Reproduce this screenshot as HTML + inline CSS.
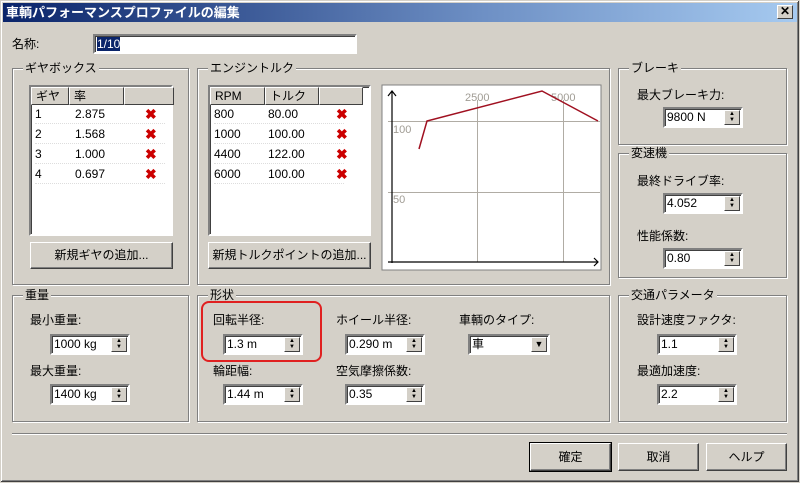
<!DOCTYPE html><html><head><meta charset="utf-8"><style>
*{box-sizing:border-box}
body{margin:0;width:800px;height:483px;background:#d4d0c8;font-family:"Liberation Sans","Noto Sans CJK JP",sans-serif;font-size:12px;color:#000;position:relative;overflow:hidden}
.a{position:absolute}
.win{left:0;top:0;width:800px;height:483px;border:1px solid #d4d0c8;box-shadow:inset -1px -1px #404040,inset 1px 1px #fff,inset -2px -2px #808080}
.title{left:3px;top:3px;width:794px;height:19px;background:linear-gradient(90deg,#0a246a,#6d8fc4 60%,#a6caf0);color:#fff;font-weight:bold;font-size:13px;line-height:19px;padding-left:3px}
.close{right:7px;top:5px;width:16px;height:14px;background:#d4d0c8;border:1px solid;border-color:#fff #404040 #404040 #fff;font-size:12px;line-height:11px;text-align:center;font-weight:bold;color:#000}
.grp{border:1px solid #808080;box-shadow:1px 1px #fff,inset 1px 1px #fff}
.gt{background:#d4d0c8;padding:0 2px;top:-8px;left:10px;position:absolute;line-height:14px}
.sunk{background:#fff;border:2px solid;border-color:#808080 #fff #fff #808080;box-shadow:inset 1px 1px #404040}
.btn{background:#d4d0c8;border:1px solid;border-color:#fff #404040 #404040 #fff;box-shadow:inset -1px -1px #808080;text-align:center}
.fld{height:21px;background:#fff;border:2px solid;border-color:#808080 #fff #fff #808080;box-shadow:inset 1px 1px #404040;padding-left:2px;line-height:17px}
.sp{position:absolute;right:1px;top:1px;width:16px;height:15px;background:#d4d0c8;border:1px solid;border-color:#fff #404040 #404040 #fff;font-size:6px;line-height:6px;text-align:center}
.hd{position:absolute;top:0;height:18px;background:#d4d0c8;border:1px solid;border-color:#fff #404040 #404040 #fff;line-height:16px;padding-left:4px}
.x{color:#c00;font-weight:bold;font-size:14px}
.row{position:absolute;left:8px;height:19px;line-height:19px;border-bottom:1px dotted #ddd;width:130px}
</style></head><body>
<div class="a win"></div>
<div class="a title">車輌パフォーマンスプロファイルの編集</div>
<div class="a close">✕</div>

<div class="a" style="left:12px;top:35px">名称:</div>
<div class="a fld" style="left:93px;top:34px;width:264px;height:20px"><span style="background:#0a246a;color:#fff">1/10</span></div>

<div class="a grp" style="left:12px;top:68px;width:177px;height:217px"><span class="gt">ギヤボックス</span></div>
<div class="a sunk" style="left:29px;top:85px;width:144px;height:151px">
<div class="hd" style="left:0;width:38px">ギヤ</div><div class="hd" style="left:38px;width:55px">率</div><div class="hd" style="left:93px;width:50px"></div>
<div class="row" style="top:18px;left:4px">1<span class="a" style="left:40px">2.875</span><span class="a x" style="left:110px">✖</span></div>
<div class="row" style="top:38px;left:4px">2<span class="a" style="left:40px">1.568</span><span class="a x" style="left:110px">✖</span></div>
<div class="row" style="top:58px;left:4px">3<span class="a" style="left:40px">1.000</span><span class="a x" style="left:110px">✖</span></div>
<div class="row" style="top:78px;left:4px">4<span class="a" style="left:40px">0.697</span><span class="a x" style="left:110px">✖</span></div>
</div>
<div class="a btn" style="left:30px;top:242px;width:143px;height:27px;line-height:25px">新規ギヤの追加...</div>

<div class="a grp" style="left:197px;top:68px;width:413px;height:217px"><span class="gt">エンジントルク</span></div>
<div class="a sunk" style="left:208px;top:85px;width:163px;height:151px">
<div class="hd" style="left:0;width:55px">RPM</div><div class="hd" style="left:55px;width:54px">トルク</div><div class="hd" style="left:109px;width:44px"></div>
<div class="row" style="top:18px;left:4px">800<span class="a" style="left:54px">80.00</span><span class="a x" style="left:122px">✖</span></div>
<div class="row" style="top:38px;left:4px">1000<span class="a" style="left:54px">100.00</span><span class="a x" style="left:122px">✖</span></div>
<div class="row" style="top:58px;left:4px">4400<span class="a" style="left:54px">122.00</span><span class="a x" style="left:122px">✖</span></div>
<div class="row" style="top:78px;left:4px">6000<span class="a" style="left:54px">100.00</span><span class="a x" style="left:122px">✖</span></div>
</div>
<div class="a btn" style="left:208px;top:242px;width:163px;height:27px;line-height:25px">新規トルクポイントの追加...</div>

<svg class="a" style="left:381px;top:84px" width="221" height="187" viewBox="381 84 221 187">
<rect x="382" y="85" width="219" height="185" fill="#fff" stroke="#808080"/>
<g stroke="#b0aca4" stroke-width="1"><line x1="388" y1="121.5" x2="600" y2="121.5"/><line x1="388" y1="192.5" x2="600" y2="192.5"/><line x1="477.5" y1="100" x2="477.5" y2="262"/><line x1="563.5" y1="100" x2="563.5" y2="262"/></g>
<g fill="#a09c94" font-size="11" font-family="Liberation Sans"><text x="465" y="101">2500</text><text x="551" y="101">5000</text><text x="393" y="133">100</text><text x="393" y="203">50</text></g>
<g stroke="#000" fill="none" stroke-width="1.2"><line x1="392" y1="91" x2="392" y2="263"/><line x1="388" y1="262" x2="598" y2="262"/><path d="M388 96 L392 91 L396 96"/><path d="M594 258 L598 262 L594 266"/></g>
<polyline points="419,149 427,121 542,91 598,121" fill="none" stroke="#a01020" stroke-width="1.5"/>
</svg>

<div class="a grp" style="left:618px;top:68px;width:169px;height:77px"><span class="gt">ブレーキ</span></div>
<div class="a" style="left:637px;top:86px">最大ブレーキ力:</div>
<div class="a fld" style="left:663px;top:107px;width:80px">9800 N<div class="sp">▲<br>▼</div></div>

<div class="a grp" style="left:618px;top:153px;width:169px;height:125px"><span class="gt">変速機</span></div>
<div class="a" style="left:637px;top:172px">最終ドライブ率:</div>
<div class="a fld" style="left:663px;top:193px;width:80px">4.052<div class="sp">▲<br>▼</div></div>
<div class="a" style="left:637px;top:227px">性能係数:</div>
<div class="a fld" style="left:663px;top:248px;width:80px">0.80<div class="sp">▲<br>▼</div></div>

<div class="a grp" style="left:12px;top:295px;width:177px;height:127px"><span class="gt">重量</span></div>
<div class="a" style="left:30px;top:311px">最小重量:</div>
<div class="a fld" style="left:50px;top:334px;width:80px">1000 kg<div class="sp">▲<br>▼</div></div>
<div class="a" style="left:30px;top:362px">最大重量:</div>
<div class="a fld" style="left:50px;top:384px;width:80px">1400 kg<div class="sp">▲<br>▼</div></div>

<div class="a grp" style="left:197px;top:295px;width:413px;height:127px"><span class="gt">形状</span></div>
<div class="a" style="left:201px;top:301px;width:121px;height:61px;border:2px solid #e02020;border-radius:8px"></div>
<div class="a" style="left:213px;top:311px">回転半径:</div>
<div class="a fld" style="left:223px;top:334px;width:80px">1.3 m<div class="sp">▲<br>▼</div></div>
<div class="a" style="left:213px;top:362px">輪距幅:</div>
<div class="a fld" style="left:223px;top:384px;width:80px">1.44 m<div class="sp">▲<br>▼</div></div>
<div class="a" style="left:336px;top:311px">ホイール半径:</div>
<div class="a fld" style="left:345px;top:334px;width:80px">0.290 m<div class="sp">▲<br>▼</div></div>
<div class="a" style="left:336px;top:362px">空気摩擦係数:</div>
<div class="a fld" style="left:345px;top:384px;width:80px">0.35<div class="sp">▲<br>▼</div></div>
<div class="a" style="left:459px;top:311px">車輌のタイプ:</div>
<div class="a fld" style="left:468px;top:334px;width:82px">車<div class="sp" style="height:15px;font-size:9px;line-height:13px">▼</div></div>

<div class="a grp" style="left:618px;top:295px;width:169px;height:127px"><span class="gt">交通パラメータ</span></div>
<div class="a" style="left:637px;top:311px">設計速度ファクタ:</div>
<div class="a fld" style="left:657px;top:334px;width:80px">1.1<div class="sp">▲<br>▼</div></div>
<div class="a" style="left:637px;top:362px">最適加速度:</div>
<div class="a fld" style="left:657px;top:384px;width:80px">2.2<div class="sp">▲<br>▼</div></div>

<div class="a" style="left:12px;top:433px;width:775px;height:2px;border-top:1px solid #808080;border-bottom:1px solid #fff"></div>
<div class="a btn" style="left:530px;top:443px;width:81px;height:28px;line-height:26px;outline:1px solid #000">確定</div>
<div class="a btn" style="left:618px;top:443px;width:81px;height:28px;line-height:26px">取消</div>
<div class="a btn" style="left:706px;top:443px;width:81px;height:28px;line-height:26px">ヘルプ</div>
</body></html>
